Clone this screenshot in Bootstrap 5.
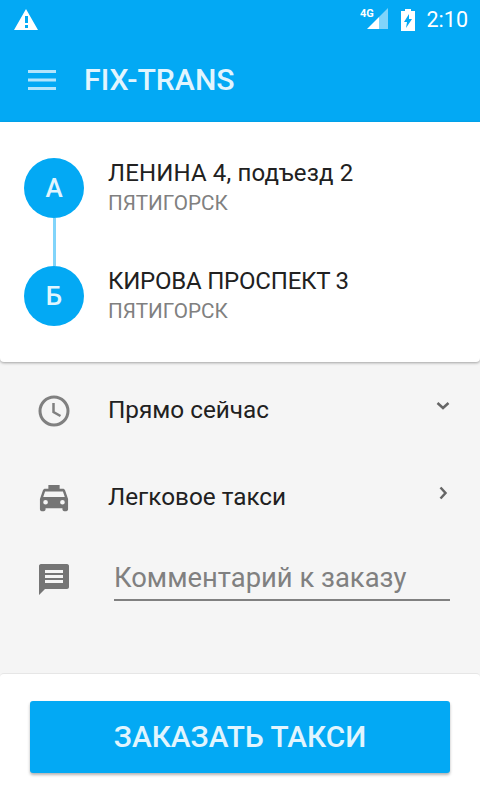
<!DOCTYPE html>
<html lang="en">
<head>
  <meta charset="UTF-8" />
  <meta name="viewport" content="width=device-width, initial-scale=1.0"/>
  <title>FIX-TRANS</title>
  <link href="https://cdn.jsdelivr.net/npm/bootstrap@5.3.0/dist/css/bootstrap.min.css" rel="stylesheet" />
  <style>
    html, body { height: 100%; overflow: hidden; }
    body { background: #f5f5f5; font-family: Roboto, "Liberation Sans", sans-serif; color: #212121; }
    .screen { height: 800px; }
    .app-head { background: #03a9f4; height: 122px; color: #fff; }
    .status-row { height: 40px; padding: 0 12px 0 14px; }
    .status-time { font-size: 21.5px; line-height: 40px; margin-left: 12px; }
    .batt-icon { margin-left: 11px; }
    .tool-row { height: 82px; padding: 0 0 2px 28px; }
    .app-title { font-size: 30.2px; font-weight: 500; color: #e1f5fe; margin-left: 28px; line-height: 1; }
    .route-card { background: #fff; height: 240px; padding: 36px 0 0 24px; border-radius: 0 0 4px 4px; box-shadow: 0 1px 3px rgba(0,0,0,.35); }
    .route-stop { height: 60px; }
    .stop-dot { width: 60px; height: 60px; border-radius: 50%; background: #03a9f4; color: #e1f5fe; font-size: 26px; font-weight: 500; flex: none; }
    .stop-line { width: 3px; height: 48px; background: #81d4fa; margin-left: 28.5px; }
    .stop-text { margin-left: 24px; }
    .stop-name { font-size: 24px; line-height: 30px; color: #212121; }
    .name-wide { letter-spacing: .15px; }
    .name-tight { letter-spacing: -.22px; }
    .stop-city { font-size: 20.7px; line-height: 30px; color: #808080; }
    .opt-row { height: 87px; padding: 0 28px 0 38px; }
    .opt-icon { width: 32px; flex: none; }
    .opt-label { font-size: 24.3px; margin-left: 38px; color: #212121; }
    .opt-arrow { margin-bottom: 9px; }
    .opt-list { padding-top: 5px; }
    .comment-row { padding: 16px 30px 0 38px; }
    .comment-icon { margin-top: 6px; }
    .comment-input { margin-left: 44px; background: transparent; border: 0; border-bottom: 2px solid #808080; border-radius: 0; padding: 0; height: 44px; font-size: 27.4px; color: #808080; }
    .comment-input::placeholder { color: #808080; opacity: 1; }
    .comment-input:focus { background: transparent; box-shadow: none; border-color: #808080; color: #808080; }
    .order-panel { background: #fff; height: 127px; padding: 27px 30px 0; border-top: 1px solid #e6e6e6; border-radius: 4px 4px 0 0; }
    .order-btn { background: #03a9f4; color: #e1f5fe; height: 72px; font-size: 29.8px; font-weight: 500; border: 0; border-radius: 3px; box-shadow: 0 2px 3px rgba(0,0,0,.3); }
  </style>
</head>
<body>
  <div class="screen d-flex flex-column">
    <div class="app-head">
      <div class="status-row d-flex align-items-center">
        <svg width="24" height="22" viewBox="0 0 24 22"><path fill="#fff" fill-rule="evenodd" d="M12 0 24 21H0ZM11 7v7h3V7Zm0 9v3h3v-3Z"/></svg>
        <div class="ms-auto d-flex align-items-center">
          <svg width="30" height="24" viewBox="-2 0 30 24">
            <path fill="#81d4fa" d="M17 9 26 0V21H17Z"/>
            <path fill="#fff" d="M5 21 17 9V21Z"/>
            <text x="-2" y="9" font-family="Roboto" font-size="11" font-weight="700" fill="#fff">4G</text>
          </svg>
          <svg class="batt-icon" width="14" height="22" viewBox="0 0 14 22"><path fill="#fff" fill-rule="evenodd" d="M4 0h6v2h4v20H0V2h4ZM8 5 3 13h3l-1 6 6-9H8Z"/></svg>
          <span class="status-time">2:10</span>
        </div>
      </div>
      <div class="tool-row d-flex align-items-center">
        <svg width="28" height="20" viewBox="0 0 28 20"><path fill="#b3e5fc" d="M0 0h28v3H0ZM0 8.500h28v3H0ZM0 17h28v3H0Z"/></svg>
        <span class="app-title">FIX-TRANS</span>
      </div>
    </div>

    <div class="route-card">
      <div class="route-stop d-flex align-items-center">
        <div class="stop-dot d-flex align-items-center justify-content-center">А</div>
        <div class="stop-text">
          <div class="stop-name name-wide">ЛЕНИНА 4, подъезд 2</div>
          <div class="stop-city">ПЯТИГОРСК</div>
        </div>
      </div>
      <div class="stop-line"></div>
      <div class="route-stop d-flex align-items-center">
        <div class="stop-dot d-flex align-items-center justify-content-center">Б</div>
        <div class="stop-text">
          <div class="stop-name name-tight">КИРОВА ПРОСПЕКТ 3</div>
          <div class="stop-city">ПЯТИГОРСК</div>
        </div>
      </div>
    </div>

    <div class="opt-list flex-grow-1">
      <div class="opt-row d-flex align-items-center">
        <svg class="opt-icon" height="32" viewBox="0 0 32 32" fill="none" stroke="#808080"><circle cx="16" cy="16" r="14" stroke-width="3"/><path stroke-width="2.500" d="M15.500 8v9l7 4"/></svg>
        <span class="opt-label">Прямо сейчас</span>
        <svg class="opt-arrow ms-auto" width="18" height="12" viewBox="0 0 18 12" fill="none" stroke="#666" stroke-width="2.500"><path d="M3.500 3l5.500 5 5.500-5"/></svg>
      </div>
      <div class="opt-row d-flex align-items-center">
        <svg class="opt-icon" height="30" viewBox="-1 -1 34 32"><path fill="#757575" fill-rule="evenodd" d="M10 1h12v4h3.500c1 0 2 .7 2.300 1.700L31 16v11c0 1-.7 2-2 2h-2c-1.300 0-2-1-2-2v-1H7v1c0 1-.7 2-2 2H3c-1.300 0-2-1-2-2V16l3.200-9.300C4.500 5.700 5.500 5 6.500 5H10ZM6.500 8 4.500 14h23l-2-6ZM7 17a2.500 2.500 0 1 0 0 5 2.500 2.500 0 0 0 0-5Zm18 0a2.500 2.500 0 1 0 0 5 2.500 2.500 0 0 0 0-5Z"/></svg>
        <span class="opt-label">Легковое такси</span>
        <svg class="opt-arrow ms-auto" width="18" height="18" viewBox="0 0 18 18" fill="none" stroke="#666" stroke-width="2.500"><path d="M6.500 3.500l5 5.500-5 5.500"/></svg>
      </div>
      <div class="comment-row d-flex align-items-start">
        <svg class="opt-icon comment-icon" height="32" viewBox="0 0 32 32"><path fill="#757575" fill-rule="evenodd" d="M3 1h26c1.300 0 2 1 2 2v21c0 1.300-1 2-2 2H7l-6 6V3c0-1 .7-2 2-2ZM7 7v3h18V7Zm0 5v3h18v-3Zm0 5v3h18v-3Z"/></svg>
        <input class="comment-input form-control" type="text" placeholder="Комментарий к заказу">
      </div>
    </div>

    <div class="order-panel">
      <button class="order-btn btn w-100" type="button">ЗАКАЗАТЬ ТАКСИ</button>
    </div>
  </div>
  <script src="https://cdn.jsdelivr.net/npm/bootstrap@5.3.0/dist/js/bootstrap.bundle.min.js"></script>
</body>
</html>
